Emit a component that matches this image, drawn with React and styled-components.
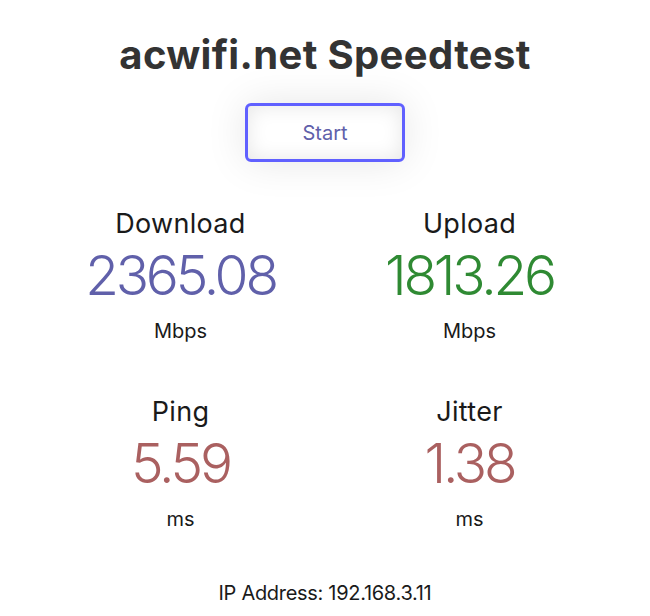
import React from "react";
import styled, { createGlobalStyle } from "styled-components";

const GlobalStyle = createGlobalStyle`
  html, body { margin: 0; padding: 0; background: #ffffff; }
  body { font-family: Inter, "Noto Sans", "Liberation Sans", sans-serif; color: #1a1a1a; }
`;

const Page = styled.main`
  display: flex;
  flex-direction: column;
  align-items: center;
  padding-top: 31px;
  text-align: center;
`;

const Title = styled.h1`
  margin: 0;
  font-size: 40px;
  line-height: 48px;
  font-weight: 700;
  color: #333333;
  letter-spacing: 0.35px;
`;

const StartButton = styled.button`
  margin-top: 24px;
  width: 160px;
  height: 59px;
  box-sizing: border-box;
  border: 3px solid #6060ff;
  border-radius: 6px;
  background: transparent;
  color: #6060aa;
  font-family: inherit;
  font-size: 20px;
  cursor: pointer;
  box-shadow: 0 0 2em rgba(0, 0, 0, 0.1), inset 0 0 1em rgba(0, 0, 0, 0.1);
`;

const Grid = styled.section`
  margin-top: 46px;
  display: grid;
  grid-template-columns: 289px 289px;
  row-gap: 53px;
  justify-content: center;
`;

const TestArea = styled.div`
  display: flex;
  flex-direction: column;
  align-items: center;
`;

const TestName = styled.div`
  font-size: 27px;
  line-height: 32px;
  color: #1a1a1a;
  letter-spacing: 0.3px;
`;

const MeterText = styled.div`
  margin-top: 5px;
  font-size: 55px;
  line-height: 60px;
  font-weight: 300;
  letter-spacing: -3.2px;
  color: ${(p) => p.$color};
`;

const Unit = styled.div`
  margin-top: 14px;
  font-size: 20px;
  line-height: 24px;
  color: #1a1a1a;
`;

const IpLine = styled.div`
  margin-top: 50px;
  font-size: 20px;
  line-height: 24px;
  letter-spacing: -0.3px;
  color: #1a1a1a;
`;

const tests = [
  { name: "Download", value: "2365.08", unit: "Mbps", color: "#6060aa" },
  { name: "Upload", value: "1813.26", unit: "Mbps", color: "#2f8a33" },
  { name: "Ping", value: "5.59", unit: "ms", color: "#aa6060" },
  { name: "Jitter", value: "1.38", unit: "ms", color: "#aa6060" },
];

export default function App() {
  return (
    <>
      <GlobalStyle />
      <Page>
        <Title>acwifi.net Speedtest</Title>
        <StartButton>Start</StartButton>
        <Grid>
          {tests.map((t) => (
            <TestArea key={t.name}>
              <TestName>{t.name}</TestName>
              <MeterText $color={t.color}>{t.value}</MeterText>
              <Unit>{t.unit}</Unit>
            </TestArea>
          ))}
        </Grid>
        <IpLine>IP Address: 192.168.3.11</IpLine>
      </Page>
    </>
  );
}
